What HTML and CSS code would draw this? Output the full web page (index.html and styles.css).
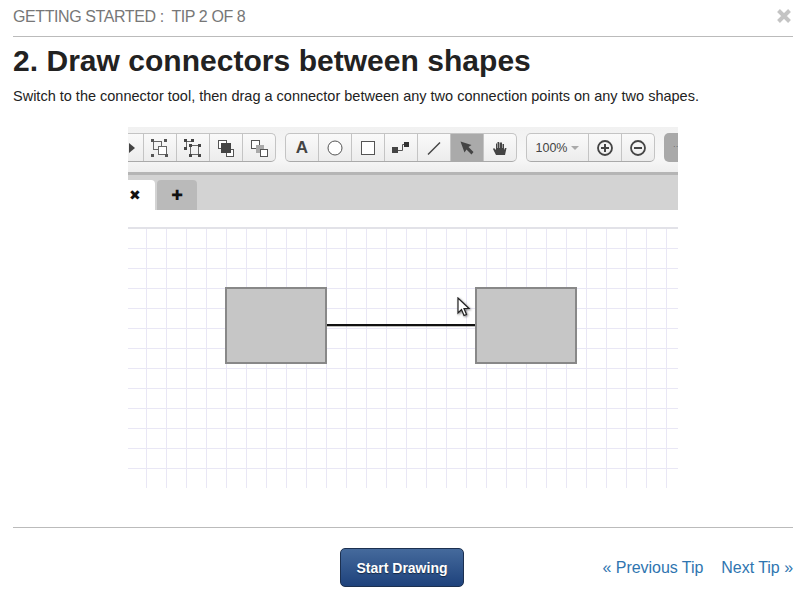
FILE: index.html
```html
<!DOCTYPE html>
<html lang="en">
<head>
<meta charset="utf-8">
<title>Getting started</title>
<link rel="stylesheet" href="styles.css">
</head>
<body>
<main class="dialog">
  <header class="top">
    <span class="eyebrow">GETTING STARTED :&nbsp; TIP 2 OF 8</span>
    <svg class="close" width="16" height="16" viewBox="0 0 16 16"><path d="M2.500 2.500l11 11M13.500 2.500l-11 11" stroke="#c4c4c4" stroke-width="4"/></svg>
  </header>
  <h1 class="title">2. Draw connectors between shapes</h1>
  <p class="lead">Switch to the connector tool, then drag a connector between any two connection points on any two shapes.</p>

  <figure class="shot">
    <div class="toolbar">
      <div class="group cut">
        <span class="btn stub"><svg width="6" height="12" viewBox="0 0 6 12"><path d="M0 1l6 5-6 5z" fill="#444"/></svg></span>
        <span class="btn"><svg width="20" height="20" viewBox="0 0 20 20"><g fill="none" stroke="#666"><rect x="3.500" y="3.500" width="8" height="8"/><rect x="8.500" y="8.500" width="8" height="8" fill="#fff"/></g><g fill="#555"><rect x="1" y="1" width="3" height="3"/><rect x="14" y="1" width="3" height="3"/><rect x="1" y="16" width="3" height="3"/><rect x="15" y="16" width="3" height="3"/></g></svg></span>
        <span class="btn"><svg width="20" height="20" viewBox="0 0 20 20"><g fill="none" stroke="#666"><path d="M3.500 3v7M3 3.500h7M7.500 7.500h8v9h-8z"/></g><g fill="#444"><rect x="1" y="1" width="3" height="3"/><rect x="8" y="1" width="3" height="3"/><rect x="1" y="9" width="3" height="3"/><rect x="6" y="6" width="3" height="3"/><rect x="15" y="6" width="3" height="3"/><rect x="6" y="16" width="3" height="3"/><rect x="15" y="16" width="3" height="3"/></g></svg></span>
        <span class="btn"><svg width="20" height="20" viewBox="0 0 20 20"><rect x="2.500" y="2.500" width="8" height="8" fill="#fff" stroke="#555"/><rect x="10.500" y="11.500" width="7" height="7" fill="#fff" stroke="#555"/><rect x="5" y="5" width="10" height="10" fill="#444"/></svg></span>
        <span class="btn"><svg width="20" height="20" viewBox="0 0 20 20"><rect x="2.500" y="2.500" width="8" height="8" fill="#fff" stroke="#555"/><rect x="7" y="7" width="8" height="8" fill="#aaa"/><rect x="11.500" y="11.500" width="7" height="7" fill="#fff" stroke="#555"/></svg></span>
      </div>
      <div class="group">
        <span class="btn letter">A</span>
        <span class="btn"><svg width="18" height="18" viewBox="0 0 18 18"><circle cx="9" cy="9" r="7" fill="#fff" stroke="#555"/></svg></span>
        <span class="btn"><svg width="18" height="18" viewBox="0 0 18 18"><rect x="2.500" y="2.500" width="13" height="13" fill="#fff" stroke="#555"/></svg></span>
        <span class="btn"><svg width="20" height="14" viewBox="0 0 20 14"><rect x="1" y="6" width="6" height="6" fill="#444"/><path d="M7 9.500h4.500v-6H14" fill="none" stroke="#555"/><rect x="13" y="1" width="5" height="5" fill="#333"/></svg></span>
        <span class="btn"><svg width="16" height="16" viewBox="0 0 16 16"><path d="M2 14.500L14 2.500" stroke="#444" stroke-width="1.500"/></svg></span>
        <span class="btn active"><svg width="16" height="16" viewBox="0 0 16 16"><path d="M1.500 1.500l11 3.500-3 2 5 5-2 2.500-5-5-2 3z" fill="#444"/></svg></span>
        <span class="btn"><svg width="16" height="16" viewBox="0 0 16 16"><path d="M4 15l-3-6 1-1 2 2V3.500h1V8h.5V2h1.500v6h.5V2.500H10V8h.5V4h1.500v6l1-2h1.500L13 15z" fill="#444"/></svg></span>
      </div>
      <div class="group">
        <span class="btn zoom">100%<i class="caret"></i></span>
        <span class="btn"><svg width="18" height="18" viewBox="0 0 18 18"><circle cx="9" cy="9" r="7" fill="none" stroke="#444" stroke-width="1.800"/><path d="M5 9h8M9 5v8" stroke="#444" stroke-width="2"/></svg></span>
        <span class="btn"><svg width="18" height="18" viewBox="0 0 18 18"><circle cx="9" cy="9" r="7" fill="none" stroke="#444" stroke-width="1.800"/><path d="M5 9h8" stroke="#444" stroke-width="2"/></svg></span>
      </div>
      <div class="more"><span>··</span></div>
    </div>
    <div class="tabs">
      <span class="tab current">✖</span>
      <span class="tab add">✚</span>
    </div>
    <div class="canvas">
      <div class="shape left"></div>
      <div class="connector"></div>
      <div class="shape right"></div>
      <svg class="cursor" width="16" height="22" viewBox="0 0 16 22"><path d="M1 1v15l3.500-3.500 2.500 6 2.500-1-2.500-6h5z" fill="#fff" stroke="#222" stroke-width="1.200"/></svg>
    </div>
  </figure>

  <footer class="actions">
    <span></span>
    <a class="primary" href="#">Start Drawing</a>
    <nav class="pager"><a href="#">« Previous Tip</a><a href="#">Next Tip »</a></nav>
  </footer>
</main>
</body>
</html>
```

FILE: styles.css
```css
* { box-sizing: border-box; }
html, body { margin: 0; background: #fff; }
body { font-family: "Liberation Sans", Arial, sans-serif; color: #222; width: 800px; height: 596px; overflow: hidden; }
.dialog { padding: 0 7px 0 13px; display: flex; flex-direction: column; }
.top { height: 37px; border-bottom: 1px solid #bbb; display: flex; justify-content: space-between; align-items: flex-start; padding-top: 8px; }
.eyebrow { font-size: 16px; line-height: 18px; color: #777; letter-spacing: -0.41px; }
.close { margin: 0 1px 0 0; }
.title { margin: 7px 0 0; font-size: 30px; line-height: 34px; font-weight: bold; color: #222; letter-spacing: 0.03px; }
.lead { margin: 10px 0 0; font-size: 14.5px; line-height: 16px; color: #222; }
.shot { margin: 23px 0 0 115px; width: 550px; height: 361px; }
.toolbar { height: 48px; padding-top: 6px; background: linear-gradient(#f1f1f1, #f7f7f7 70%, #eee); border-bottom: 3px solid #b5b5b5; display: flex; align-items: flex-start; gap: 9px; overflow: hidden; }
.group { display: flex; height: 29px; border: 1px solid #c4c4c4; border-bottom-color: #aaa; border-radius: 5px; background: linear-gradient(#fafafa, #ececec); }
.group.cut { border-left: 0; border-radius: 0 5px 5px 0; }
.btn { width: 33px; display: flex; align-items: center; justify-content: center; border-left: 1px solid #c4c4c4; }
.btn:first-child { border-left: 0; width: 32px; }
.btn.stub { width: 15px; justify-content: flex-start; padding-left: 1px; }
.letter { font-size: 17px; font-weight: bold; color: #444; }
.active { background: #aaa; }
.btn.zoom { width: 61px; font-size: 12.5px; color: #444; gap: 4px; }
.caret { width: 0; height: 0; border: 4px solid transparent; border-top: 4px solid #aaa; border-bottom: 0; }
.more { flex: 1; height: 29px; background: #a9a9a9; border-radius: 5px 0 0 5px; font-size: 8px; line-height: 27px; color: #555; padding-left: 9px; }
.tabs { height: 35px; background: #d3d3d3; display: flex; align-items: flex-end; gap: 2px; }
.tab { height: 30px; display: flex; align-items: center; justify-content: center; font-size: 14px; color: #111; font-family: "DejaVu Sans", sans-serif; }
.current { width: 27px; background: #fff; border-radius: 0 4px 0 0; justify-content: flex-start; padding-left: 1px; }
.add { width: 40px; background: #bababa; border-radius: 4px 4px 0 0; }
.canvas { position: relative; margin-top: 17px; height: 261px; border-top: 2px solid #e2e2e8;
  background-image: linear-gradient(to right, #e9e7f5 1px, transparent 1px), linear-gradient(to bottom, #e9e7f5 1px, transparent 1px);
  background-size: 20px 100%, 100% 20px;
  background-position: 18px 0, 0 19px;
  background-repeat: repeat-x, repeat-y; }
.shape { position: absolute; top: 58px; width: 102px; height: 77px; background: #c6c6c6; border: 2px solid #888; }
.left { left: 97px; }
.right { left: 347px; }
.connector { position: absolute; left: 199px; top: 95px; width: 150px; height: 2px; background: #111; box-shadow: 0 1px 0 rgba(0,0,0,.25); }
.cursor { position: absolute; left: 329px; top: 68px; filter: drop-shadow(1px 1px 1px rgba(0,0,0,.5)); }
.actions { margin-top: 39px; border-top: 1px solid #bbb; padding-top: 20px; display: grid; grid-template-columns: 1fr auto 1fr; align-items: center; }
.primary { width: 124px; height: 39px; margin: 0 1px 0 -1px; display: flex; align-items: center; justify-content: center; border: 1px solid #1c3050; border-radius: 5px; background: linear-gradient(#456a9c, #1e427c); color: #fff; font-size: 14px; font-weight: bold; text-decoration: none; text-shadow: 0 1px 1px rgba(0,0,0,.5); }
.pager { display: flex; justify-content: flex-end; gap: 18px; font-size: 16px; letter-spacing: -0.04px; }
.pager a { color: #2f75b0; text-decoration: none; }
```
